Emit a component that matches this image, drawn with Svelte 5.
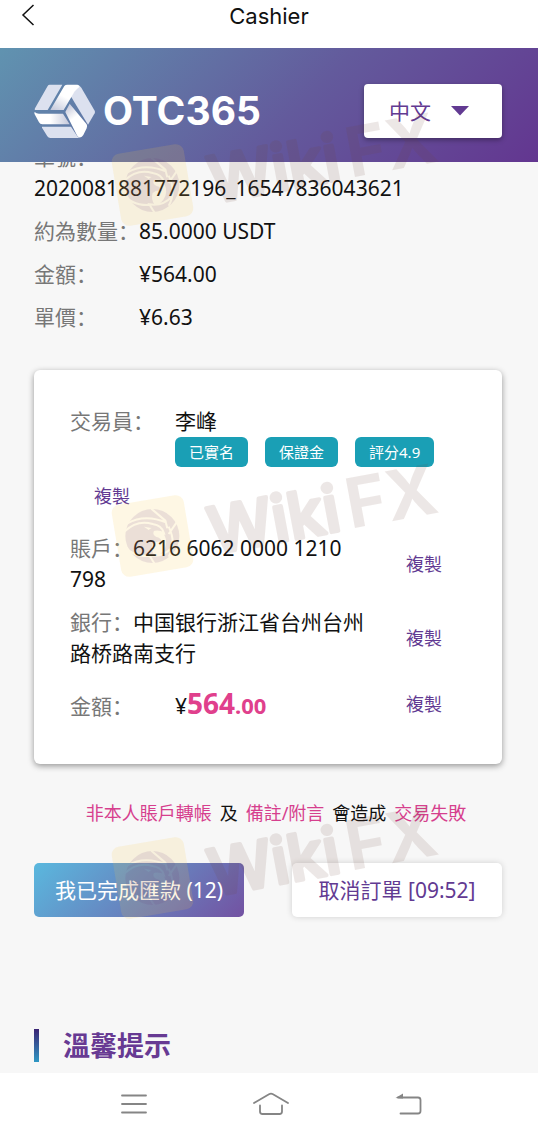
<script>
  const order = [
    { label: '約為數量', value: '85.0000 USDT' },
    { label: '金額', value: '¥564.00' },
    { label: '單價', value: '¥6.63' }
  ];
  const badges = ['已實名', '保證金', '評分4.9'];
  const account = [
    { label: '賬戶', value: '6216 6062 0000 1210 798' },
    { label: '銀行', value: '中国银行浙江省台州台州路桥路南支行' }
  ];
  const marks = [85, 436, 778];
  let language = $state('zh');
</script>

<div class="page">
  <header class="titlebar">
    <button class="back" aria-label="Back">
      <svg width="14" height="22" viewBox="0 0 14 22" fill="none" stroke="#111" stroke-width="1.5">
        <path d="M12.5 1 2 11l10.500 10" />
      </svg>
    </button>
    <h1>Cashier</h1>
  </header>

  <div class="brandbar">
    <a class="brand" href="#home">
      <svg width="62" height="55" viewBox="102 250 186 165">
        <defs>
          <linearGradient id="g1" x1="0" y1="0" x2="1" y2="0">
            <stop offset="0" stop-color="#fff" /><stop offset="0.45" stop-color="#fff" /><stop offset="1" stop-color="#c3c7da" />
          </linearGradient>
          <linearGradient id="g2" x1="0" y1="1" x2="0.6" y2="0">
            <stop offset="0" stop-color="#c3c7da" /><stop offset="0.6" stop-color="#fff" />
          </linearGradient>
          <linearGradient id="g3" x1="0" y1="0" x2="0.5" y2="1">
            <stop offset="0" stop-color="#b9bdd2" /><stop offset="0.5" stop-color="#fff" />
          </linearGradient>
        </defs>
        <path fill="#dce1ef" d="M149 252h38l-44 76h-38q-2-2 0-5l38-67q2-4 6-4z" />
        <path fill="#dce1ef" d="M236 255q5 1 8 6l40 69q2 4 0 8l-20 34-52-86z" />
        <path fill="url(#g2)" d="M202 252h30q10 2 5 8-8 6-14 14l-32 54h-40l42-72q3-4 9-4z" />
        <path fill="url(#g1)" d="M104 334q5 5 13 5h72l20 32h-82q-7 0-10-6l-13-24q-2-4 0-7z" />
        <path fill="#dce1ef" d="M126 378h87l18 27q3 7 10 5-3 2-8 2h-82q-6 0-9-5l-16-26z" />
        <path fill="url(#g3)" d="M196 334l13-25 51 62q3 6 0 12l-10 20q-5 9-13 7-4-2-7-8z" />
      </svg>
      <span>OTC365</span>
    </a>
    <div class="language">
      <select aria-label="語言" bind:value={language}>
        <option value="zh">中文</option>
      </select>
      <svg width="18" height="10" viewBox="0 0 18 10"><path fill="#623a92" d="M0 0h18L9 9.500z" /></svg>
    </div>
  </div>

  <main>
    <dl class="order">
      <div class="serial">
        <dt>單號：</dt>
        <dd>2020081881772196_16547836043621</dd>
      </div>
      {#each order as row}
        <div class="pair">
          <dt>{row.label}：</dt>
          <dd>{row.value}</dd>
        </div>
      {/each}
    </dl>

    <section class="card">
      <div class="trader">
        <span class="label">交易員：</span>
        <div>
          <div>李峰</div>
          <div class="badges">
            {#each badges as badge}<span>{badge}</span>{/each}
          </div>
        </div>
      </div>
      <button class="copy first">複製</button>
      {#each account as row}
        <div class="entry">
          <p><span class="label">{row.label}：</span>{row.value}</p>
          <button class="copy">複製</button>
        </div>
      {/each}
      <div class="entry amount">
        <p><span class="label">金額：</span><span>¥<b>564<small>.00</small></b></span></p>
        <button class="copy">複製</button>
      </div>
    </section>

    <p class="notice"><em>非本人賬戶轉帳</em><span>及</span><em>備註/附言</em><span>會造成</span><em>交易失敗</em></p>

    <div class="actions">
      <button class="done">我已完成匯款 (12)</button>
      <button class="cancel">取消訂單 [09:52]</button>
    </div>

    <h2>溫馨提示</h2>
  </main>

  <nav>
    <button aria-label="Menu">
      <svg width="26" height="22" viewBox="0 0 26 22" fill="none" stroke="#858585" stroke-width="1.800" stroke-linecap="round">
        <path d="M1 2.500h24M1 11h24M1 19.500h24" />
      </svg>
    </button>
    <button aria-label="Home">
      <svg width="36" height="24" viewBox="0 0 36 24" fill="none" stroke="#858585" stroke-width="1.800" stroke-linecap="round" stroke-linejoin="round">
        <path d="M1 11 16 2.200q2-1 4 0L35 11M7 13.500v6q0 2.500 2.500 2.500h17q2.500 0 2.500-2.500v-6" />
      </svg>
    </button>
    <button aria-label="Return">
      <svg width="27" height="22" viewBox="0 0 27 22" fill="none" stroke="#858585" stroke-width="1.800" stroke-linecap="round">
        <path d="M3 4.500h20q2.500 0 2.500 2.500v11q0 2.500-2.500 2.500H5.500" />
        <path d="M.5 5 8 .5v4.900z" fill="#858585" stroke="none" />
      </svg>
    </button>
  </nav>

  {#each marks as top}
    <svg class="mark" style="top: {top}px" width="400" height="160" viewBox="0 -15 400 160" aria-hidden="true">
      <mask id="eagle{top}" maskUnits="userSpaceOnUse" x="310" y="440" width="180" height="180">
        <circle cx="397" cy="528" r="81" fill="#fff" />
        <g fill="none" stroke="#000" stroke-width="6">
          <path d="M322 490Q375 460 440 488M394 446L436 482 442 505M472 484L446 522M446 500Q470 550 446 590M404 612L388 586Q430 592 456 562M312 552Q330 590 388 588" />
          <path d="M314 514Q352 478 398 492 426 496 432 520 416 512 402 516" />
        </g>
        <path fill="#000" d="M402 514Q420 510 432 522 446 550 430 572 420 586 404 588 392 570 398 552 410 542 426 546 424 534 408 530 396 524 402 514zM372 500l22 4-8 6z" />
      </mask>
      <rect x="11" y="48.500" width="73" height="73" rx="8" fill="#f8cc4a" opacity="0.150" transform="rotate(-9.500 47.500 85)" />
      <g transform="scale(.33333) translate(-255 -273)" opacity="0.120">
        <rect x="310" y="440" width="180" height="180" fill="#6b3a80" mask="url(#eagle{top})" />
      </g>
      <g transform="translate(104 104) rotate(-10.500)" fill="#6e4438" stroke="#6e4438" stroke-linejoin="round" opacity="0.120">
        <text x="4" font-size="64" stroke-width="4" font-weight="500">Wiki</text>
        <text x="144" font-size="69" stroke-width="0" font-weight="700">FX</text>
      </g>
    </svg>
  {/each}
</div>

<style>
  :global(body) { margin: 0; background: #fff; }
  .page {
    position: relative;
    overflow: hidden;
    color: #111;
    font: 21px/31px "Noto Sans", "Noto Sans CJK SC", sans-serif;
  }
  button, select {
    font: inherit;
    border: 0;
    margin: 0;
    padding: 0;
    background: none;
    cursor: pointer;
  }
  svg { display: block; }
  p, dl, dd, h1, h2 { margin: 0; }

  .titlebar {
    display: grid;
    grid-template-columns: 48px 1fr 48px;
    height: 48px;
  }
  .back { padding: 4px 0 0 21px; justify-self: start; align-self: start; }
  h1 {
    font: 400 22px/32px Inter, sans-serif;
    text-align: center;
  }

  .brandbar {
    position: relative;
    z-index: 1;
    display: flex;
    justify-content: space-between;
    align-items: center;
    padding: 36px 36px 24px 34px;
    background: linear-gradient(135deg, #6093b0, #635a9c 55%, #633690);
  }
  .brand {
    display: flex;
    align-items: center;
    gap: 7px;
    color: #fff;
    text-decoration: none;
    font: 700 39px/54px Inter, sans-serif;
  }
  .brand, .language { height: 54px; }
  .language {
    display: grid;
    align-items: center;
    width: 138px;
    background: #fff;
    border-radius: 4px;
    box-shadow: 0 2px 5px rgba(0, 0, 0, 0.35);
  }
  .language > * { grid-area: 1 / 1; }
  .language select {
    appearance: none;
    width: 100%;
    height: 100%;
    padding: 0 25px;
    color: #623a92;
  }
  .language svg { justify-self: end; margin-right: 33px; pointer-events: none; }

  main {
    padding: 0 36px 11px 34px;
    background: #f7f7f7;
  }
  .order {
    display: flex;
    flex-direction: column;
    gap: 12px;
    margin-top: -20px;
  }
  dt, .label { color: #777; }
  .pair, .trader { display: flex; }
  .pair dt, .trader .label { width: 105px; flex: none; }

  .card {
    margin-top: 37px;
    padding: 36px;
    background: #fff;
    border-radius: 6px;
    box-shadow: 0 2px 6px rgba(0, 0, 0, 0.4);
  }
  .badges { display: flex; gap: 17px; }
  .badges span {
    padding: 0 14px;
    border-radius: 6px;
    background: #1a9fb5;
    color: #fff;
    font-size: 15px;
    line-height: 30px;
    white-space: nowrap;
  }
  .copy {
    flex: none;
    padding: 0 24px;
    color: #623a92;
    font-size: 18px;
    line-height: 31px;
  }
  .first { display: block; margin-top: 14px; }
  .entry {
    display: flex;
    align-items: center;
    justify-content: space-between;
    margin-top: 12px;
  }
  .first + .entry { margin-top: 21px; }
  .entry p { padding-right: 12px; }
  .amount { min-height: 47px; }
  .amount p { display: flex; align-items: baseline; }
  .amount .label { width: 105px; }
  .amount b { font-size: 28px; color: #e0408c; }
  .amount small { font-size: 22px; }

  .notice {
    display: flex;
    flex-wrap: wrap;
    justify-content: center;
    gap: 0 8px;
    margin-top: 34px;
    padding-left: 16px;
    font-size: 18px;
  }
  .notice em { font-style: normal; color: #d63f8e; }

  .actions {
    display: grid;
    grid-template-columns: 1fr 1fr;
    gap: 48px;
    margin-top: 34px;
  }
  .actions button {
    height: 54px;
    border-radius: 5px;
    white-space: nowrap;
  }
  .done { color: #fff; background: linear-gradient(135deg, #5ab8de, #7352a2); }
  .cancel { color: #623a92; background: #fff; box-shadow: 0 0 6px rgba(0, 0, 0, 0.16); }

  h2 {
    display: flex;
    align-items: center;
    gap: 24px;
    margin-top: 112px;
    color: #673a93;
    font-size: 27px;
    line-height: 32px;
  }
  h2::before {
    content: "";
    width: 5px;
    height: 33px;
    background: linear-gradient(#3a2474, #2f98c4);
  }

  nav {
    display: flex;
    align-items: center;
    justify-content: center;
    gap: 106px;
    padding-left: 4px;
    height: 61px;
    background: #fff;
  }

  .mark {
    position: absolute;
    left: 105px;
    z-index: 2;
    pointer-events: none;
    font-family: Inter, sans-serif;
  }
</style>
